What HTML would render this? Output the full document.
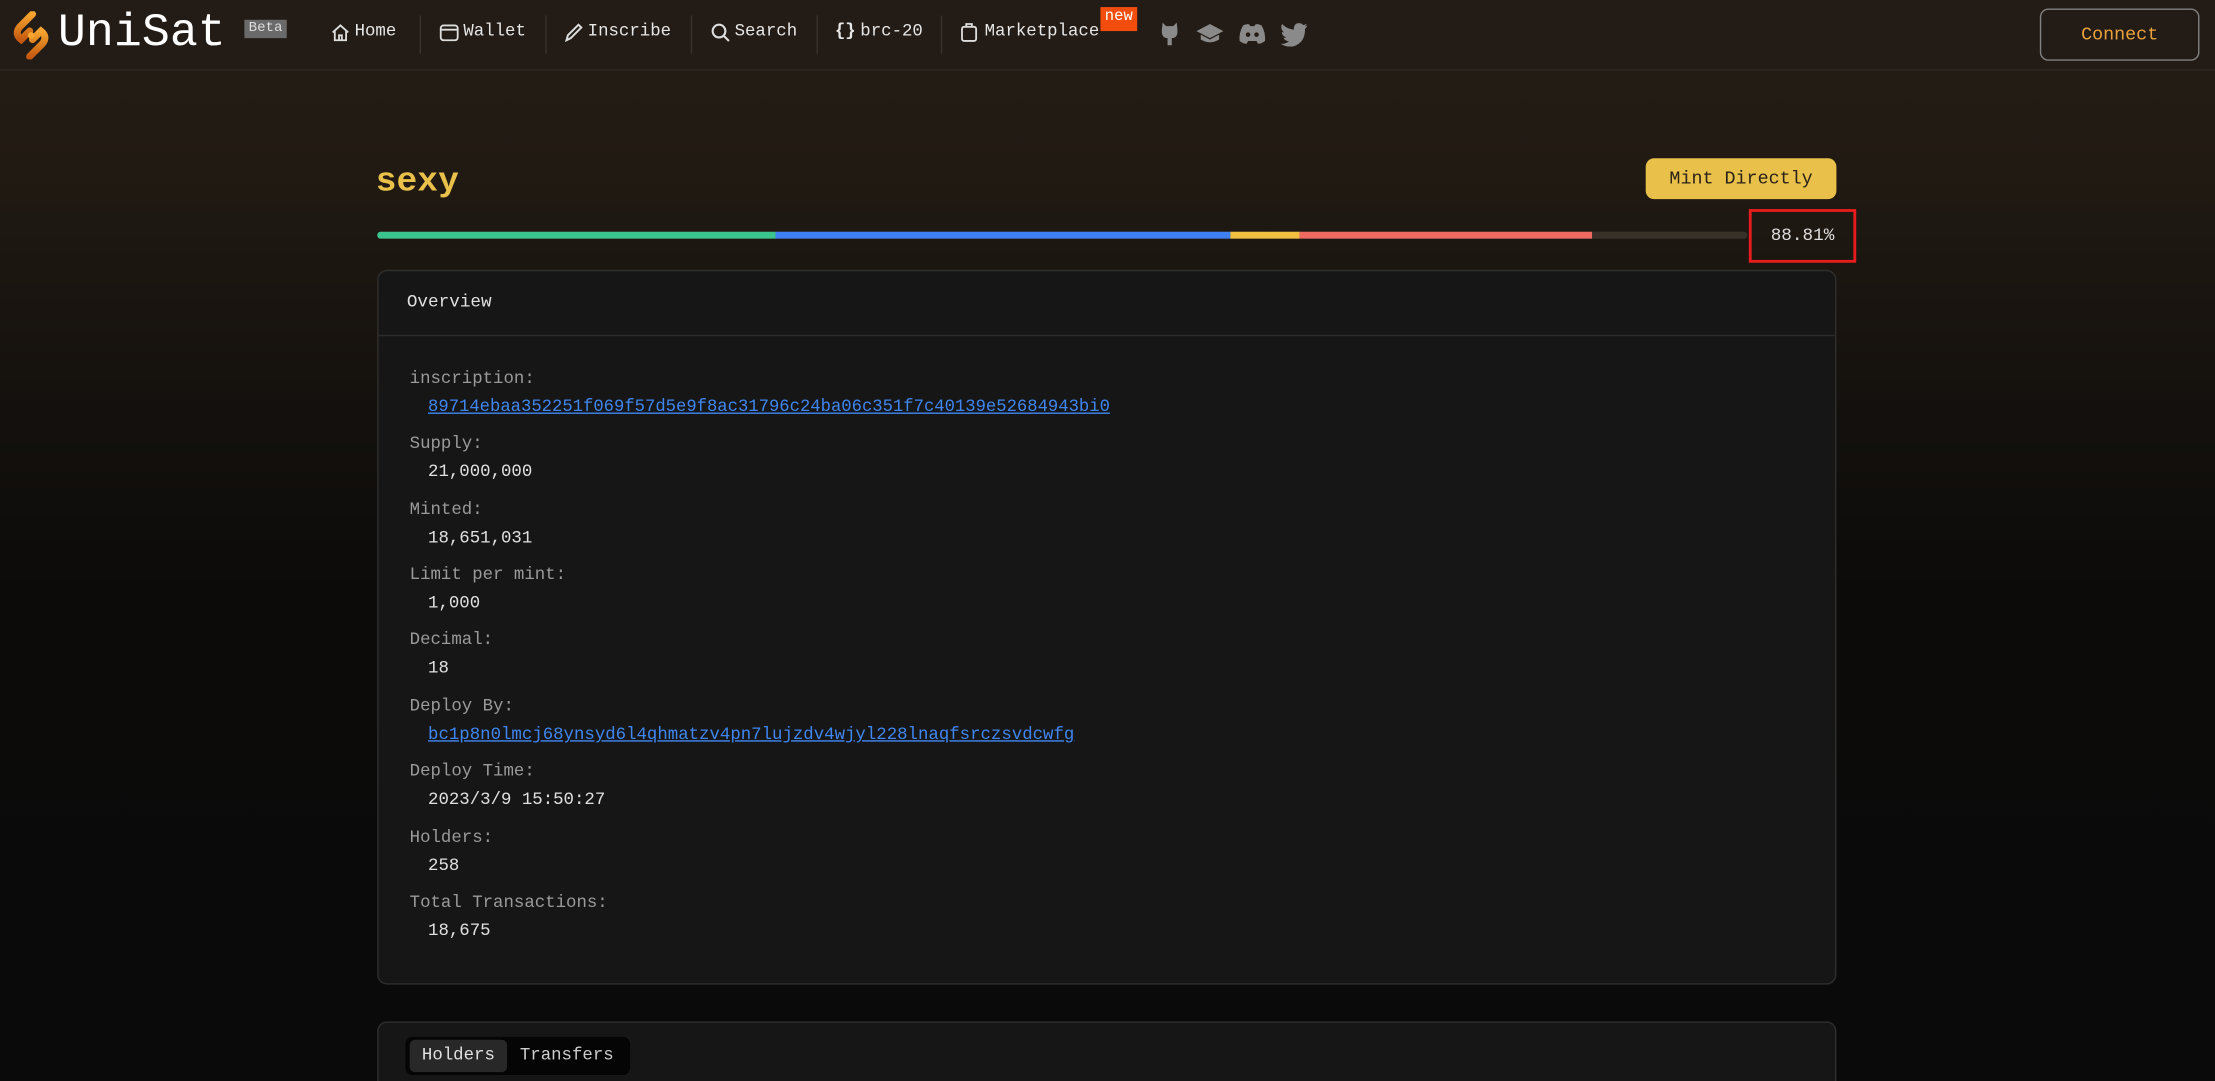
<!DOCTYPE html>
<html><head><meta charset="utf-8"><style>
*{margin:0;padding:0;box-sizing:border-box}
html,body{width:2215px;height:1081px;overflow:hidden;background:#0a0a0a}
#w{width:1568px;height:765px;transform:scale(1.41263);transform-origin:0 0;position:relative;font-family:"Liberation Mono",monospace;color:#ddd;
background:linear-gradient(180deg,#251d15 0px,#211a13 120px,#16120e 260px,#0c0b0a 420px,#0a0a0a 765px)}
.a{position:absolute;white-space:nowrap}
.nav{position:absolute;left:0;top:0;width:1568px;height:50px;background:#231c16;border-bottom:1px solid #2f2821}
.ni{font-size:12.3px;color:#e6e6e6;top:15px}
.sep{position:absolute;top:11px;width:1px;height:27px;background:#3a322a}
.lab{font-size:12.3px;color:#9a9a9a;left:290px}
.val{font-size:12.3px;color:#e0e0e0;left:303px}
.lnk{color:#3f86f0;text-decoration:underline}
</style></head><body><div id="w">
<div class="nav"></div>
<svg class="a" style="left:9px;top:8px" width="26" height="34" viewBox="0 0 26 34"><defs><linearGradient id="g" x1="0" y1="0" x2="0" y2="1"><stop offset="0" stop-color="#f7a530"/><stop offset="1" stop-color="#c55a10"/></linearGradient></defs><path d="M14 2 L5 11 Q1 16 6 20 L12 14" stroke="url(#g)" stroke-width="5" fill="none" stroke-linecap="round"/><path d="M12 32 L21 23 Q25 18 20 14 L14 20" stroke="url(#g)" stroke-width="5" fill="none" stroke-linecap="round"/><circle cx="13" cy="17" r="2.3" fill="#f7a530"/></svg>
<div class="a" style="left:41px;top:5px;font-size:33px;color:#fff">UniSat</div>
<div class="a" style="left:173px;top:14px;width:30px;height:13px;background:#6a6a6a;font-size:10px;line-height:13px;text-align:center;color:#ddd">Beta</div>
<svg class="a" style="left:234px;top:16px" width="14" height="14" viewBox="0 0 14 14" fill="none" stroke="#ddd" stroke-width="1.3"><path d="M1.5 7 L7 2 L12.5 7 M3 6 V12.5 H11 V6 M6 12.5 V9 H8 V12.5"/></svg>
<div class="a ni" style="left:251px">Home</div>
<div class="sep" style="left:297px"></div>
<svg class="a" style="left:311px;top:16px" width="14" height="14" viewBox="0 0 14 14" fill="none" stroke="#ddd" stroke-width="1.3"><rect x="1" y="2" width="12" height="10.5" rx="2"/><path d="M1 5 H13"/></svg>
<div class="a ni" style="left:328px">Wallet</div>
<div class="sep" style="left:386px"></div>
<svg class="a" style="left:399px;top:16px" width="14" height="14" viewBox="0 0 14 14" fill="none" stroke="#ddd" stroke-width="1.4"><path d="M2 12.5 L3 9 L10.5 1.5 L12.5 3.5 L5 11 Z"/></svg>
<div class="a ni" style="left:416px">Inscribe</div>
<div class="sep" style="left:489px"></div>
<svg class="a" style="left:503px;top:16px" width="14" height="14" viewBox="0 0 14 14" fill="none" stroke="#ddd" stroke-width="1.5"><circle cx="6" cy="6" r="4.5"/><path d="M9.3 9.3 L13 13"/></svg>
<div class="a ni" style="left:520px">Search</div>
<div class="sep" style="left:578px"></div>
<div class="a ni" style="left:591px;font-weight:bold">{}</div>
<div class="a ni" style="left:609px">brc-20</div>
<div class="sep" style="left:666px"></div>
<svg class="a" style="left:680px;top:15px" width="12" height="15" viewBox="0 0 12 15" fill="none" stroke="#ddd" stroke-width="1.3"><rect x="1" y="4" width="10" height="10" rx="1.5"/><path d="M4 4 V2 H8 V4"/></svg>
<div class="a ni" style="left:697px">Marketplace</div>
<div class="a" style="left:779px;top:5px;width:26px;height:17px;background:#f24d0c;font-size:11px;line-height:15px;text-align:center;color:#fff">new</div>
<svg class="a" style="left:820px;top:15px" width="16" height="18" viewBox="0 0 16 18" fill="#8a8a8a"><path d="M3 1 L5.5 3.5 H10.5 L13 1 L13.5 6 Q14 12 9.5 12 V17 H6.5 V12 Q2 12 2.5 6 Z"/></svg>
<svg class="a" style="left:846px;top:16px" width="21" height="16" viewBox="0 0 21 16" fill="#8a8a8a"><path d="M10.5 1 L20 6 L10.5 11 L1 6 Z M4 8.5 V12 Q10.5 16 17 12 V8.5 L10.5 12 Z"/></svg>
<svg class="a" style="left:876px;top:16px" width="21" height="16" viewBox="0 0 21 16" fill="#8a8a8a"><path d="M4 2 Q7 0.5 8.5 1.5 L9 2.5 H12 L12.5 1.5 Q14 0.5 17 2 Q20 7 19.5 13 Q17 15 14.5 15 L13.5 13 H7.5 L6.5 15 Q4 15 1.5 13 Q1 7 4 2 Z"/><circle cx="7.5" cy="8.5" r="1.6" fill="#231c16"/><circle cx="13.5" cy="8.5" r="1.6" fill="#231c16"/></svg>
<svg class="a" style="left:906px;top:16px" width="20" height="17" viewBox="0 0 20 17" fill="#8a8a8a"><path d="M19.5 2 Q18.5 2.6 17.5 2.8 Q18.6 2 19 0.8 Q17.8 1.5 16.6 1.8 Q15 0 12.5 0.5 Q9.5 1.5 10 5 Q5.5 4.8 1.5 1 Q0 4.5 3 7 Q2 7 1.3 6.6 Q1.5 9.5 4.5 10.5 Q3.5 10.8 2.5 10.6 Q3.5 13 6.5 13.2 Q3.5 15.5 0.5 15 Q9 20 15.5 13 Q18 9.5 17.8 4.5 Q19 3.5 19.5 2 Z"/></svg>
<div class="a" style="left:1444px;top:6px;width:113px;height:37px;border:1px solid #808080;border-radius:6px;font-size:13px;line-height:35px;text-align:center;color:#e9a23b">Connect</div>

<div class="a" style="left:266px;top:116px;font-size:24.5px;font-weight:bold;color:#e8c04a">sexy</div>
<div class="a" style="left:1165px;top:112px;width:135px;height:29px;background:#e8c04a;border-radius:6px;font-size:13px;line-height:29px;text-align:center;color:#2a2218">Mint Directly</div>
<div class="a" style="left:267px;top:164px;width:970px;height:5px;border-radius:3px;overflow:hidden;background:#3a302a">
<div class="a" style="left:0;top:0;width:282px;height:5px;background:#3cc48e"></div>
<div class="a" style="left:282px;top:0;width:322px;height:5px;background:#3f80f2"></div>
<div class="a" style="left:604px;top:0;width:49px;height:5px;background:#f2c040"></div>
<div class="a" style="left:653px;top:0;width:207px;height:5px;background:#f06a62"></div>
</div>
<div class="a" style="left:1238px;top:148px;width:76px;height:38px;border:2px solid #e81c1c;font-size:12.5px;line-height:34px;text-align:center;color:#ddd">88.81%</div>

<div class="a" style="left:267px;top:191px;width:1033px;height:506px;background:#161616;border:1px solid #2e2e2e;border-radius:7px">
<div class="a" style="left:0;top:45px;width:1031px;height:1px;background:#2c2c2c"></div>
<div class="a" style="left:20px;top:15px;font-size:12.5px;color:#e0e0e0">Overview</div>
</div>
<div class="a lab" style="top:261px">inscription:</div>
<div class="a val lnk" style="top:281px;font-size:12.2px">89714ebaa352251f069f57d5e9f8ac31796c24ba06c351f7c40139e52684943bi0</div>
<div class="a lab" style="top:307px">Supply:</div><div class="a val" style="top:327px">21,000,000</div>
<div class="a lab" style="top:354px">Minted:</div><div class="a val" style="top:374px">18,651,031</div>
<div class="a lab" style="top:400px">Limit per mint:</div><div class="a val" style="top:420px">1,000</div>
<div class="a lab" style="top:446px">Decimal:</div><div class="a val" style="top:466px">18</div>
<div class="a lab" style="top:493px">Deploy By:</div><div class="a val lnk" style="top:513px">bc1p8n0lmcj68ynsyd6l4qhmatzv4pn7lujzdv4wjyl228lnaqfsrczsvdcwfg</div>
<div class="a lab" style="top:539px">Deploy Time:</div><div class="a val" style="top:559px">2023/3/9 15:50:27</div>
<div class="a lab" style="top:586px">Holders:</div><div class="a val" style="top:606px">258</div>
<div class="a lab" style="top:632px">Total Transactions:</div><div class="a val" style="top:652px">18,675</div>

<div class="a" style="left:267px;top:723px;width:1033px;height:60px;background:#161616;border:1px solid #2e2e2e;border-radius:7px"></div>
<div class="a" style="left:287px;top:734px;width:159px;height:27px;background:#050505;border-radius:5px"></div>
<div class="a" style="left:290px;top:736px;width:69px;height:23px;background:#282828;border-radius:4px;font-size:12.3px;line-height:23px;text-align:center;color:#e0e0e0">Holders</div>
<div class="a" style="left:368px;top:740px;font-size:12.3px;color:#ccc">Transfers</div>
</div></body></html>
